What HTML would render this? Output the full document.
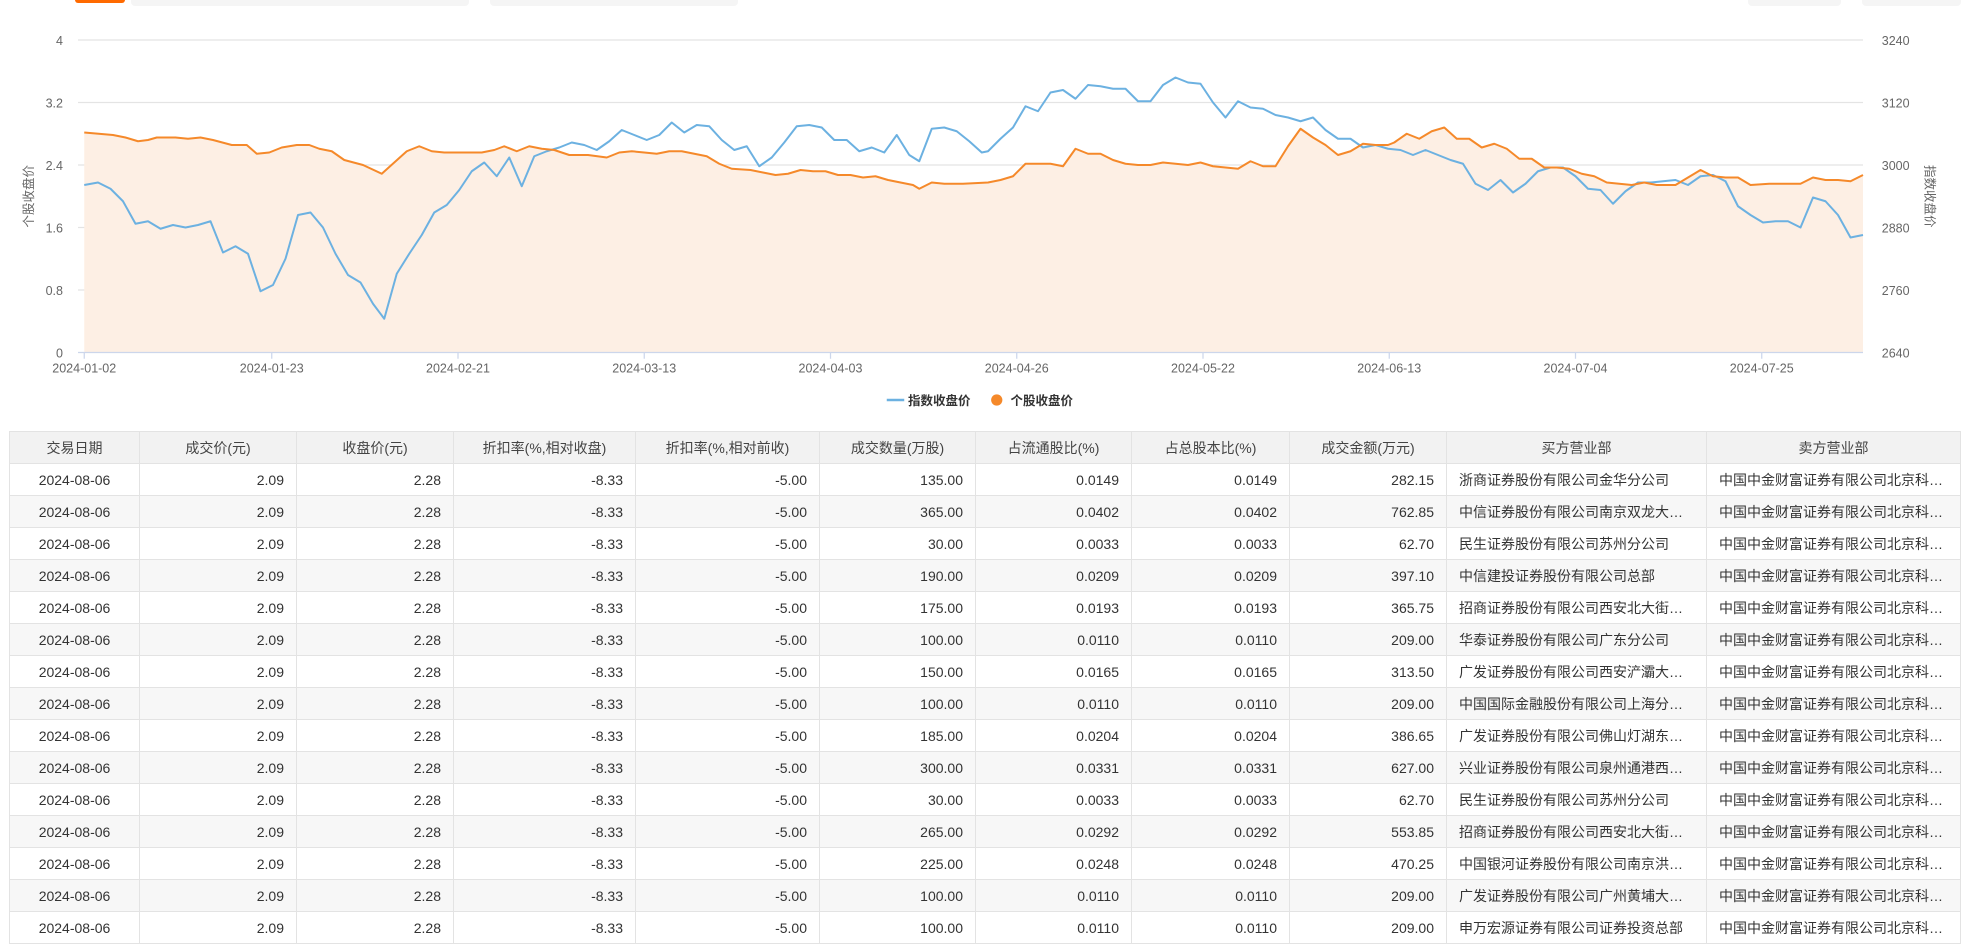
<!DOCTYPE html>
<html><head><meta charset="utf-8"><style>
body{margin:0;width:1961px;height:944px;overflow:hidden;background:#fff;font-family:"Liberation Sans","Noto Sans CJK SC",sans-serif;position:relative}
.tb{position:absolute;top:0;height:6px;background:#f5f5f5;border-radius:0 0 4px 4px}
svg{position:absolute;left:0;top:0}
table{position:absolute;top:431px;left:9px;border-collapse:collapse;table-layout:fixed;font-size:14px;color:#333}
td,th{height:31px;border:1px solid #e3e3e3;padding:0 12px;white-space:nowrap;overflow:hidden;font-weight:normal}
th{background:#f2f2f2;text-align:center;color:#444}
tbody tr:nth-child(even) td{background:#f7f7f7}
td.c{text-align:center}td.r{text-align:right}td.l{text-align:left}
</style></head><body>
<div class="tb" style="left:131px;width:338px"></div>
<div style="position:absolute;top:0;left:75px;width:50px;height:3px;background:#ff6a00;border-radius:0 0 3px 3px"></div>
<div class="tb" style="left:490px;width:248px"></div>
<div class="tb" style="left:1748px;width:93px"></div>
<div class="tb" style="left:1862px;width:99px"></div>
<svg width="1961" height="420" viewBox="0 0 1568 336" font-family="Liberation Sans,Noto Sans CJK SC,sans-serif">
<g stroke="#e4e4e4" stroke-width="1">
<line x1="62" y1="32" x2="1490" y2="32"/><line x1="62" y1="82" x2="1490" y2="82"/><line x1="62" y1="132" x2="1490" y2="132"/><line x1="62" y1="182" x2="1490" y2="182"/><line x1="62" y1="232" x2="1490" y2="232"/>
</g>
<polygon fill="#fdefe4" points="67,282 67,106 90,108 100,110 110,113 118,112 125,110 140,110 150,111 160,110 170,112 185,116 197,116 205,123 215,122 225,118 237,116 247,116 255,119 265,121 275,128 290,132 305,139 315,130 325,121 335,117 345,121 355,122 365,122 385,122 395,120 403,117 413,121 423,117 433,119 443,120 455,124 470,124 485,126 495,122 505,121 515,122 525,123 535,121 545,121 555,123 565,125 575,131 585,135 600,136 610,138 620,140 630,139 640,136 650,137 660,137 670,140 680,140 690,142 700,141 710,144 720,146 730,148 735,151 745,146 755,147 770,147 790,146 800,144 810,141 820,131 840,131 850,133 860,119 870,123 880,123 890,128 900,131 910,132 920,132 930,130 940,131 950,132 960,130 970,133 980,134 990,135 1000,129 1010,133 1020,133 1030,117 1040,103 1050,110 1060,116 1070,124 1080,121 1090,115 1100,116 1110,116 1115,114 1125,107 1135,111 1145,105 1155,102 1165,111 1175,111 1185,118 1195,115 1205,119 1215,127 1225,127 1235,134 1245,134 1255,135 1265,139 1275,141 1285,146 1295,147 1305,148 1315,146 1325,148 1340,148 1350,142 1360,136 1370,141 1380,142 1390,142 1400,148 1415,147 1425,147 1440,147 1450,142 1460,144 1470,144 1480,145 1490,140 1490,282"/>
<line x1="62" y1="282" x2="1490" y2="282" stroke="#ccd6eb"/>
<g stroke="#ccd6eb"><line x1="67" y1="282" x2="67" y2="287"/><line x1="217" y1="282" x2="217" y2="287"/><line x1="366" y1="282" x2="366" y2="287"/><line x1="515" y1="282" x2="515" y2="287"/><line x1="664" y1="282" x2="664" y2="287"/><line x1="813" y1="282" x2="813" y2="287"/><line x1="962" y1="282" x2="962" y2="287"/><line x1="1111" y1="282" x2="1111" y2="287"/><line x1="1260" y1="282" x2="1260" y2="287"/><line x1="1409" y1="282" x2="1409" y2="287"/></g>
<polyline fill="none" stroke="#6cb1e1" stroke-width="1.6" stroke-linejoin="round" points="67,148 78,146 88,151 98,161 108,179 118,177 128,183 138,180 148,182 158,180 168,177 178,202 188,197 198,203 208,233 218,228 228,207 238,172 248,170 258,182 268,203 278,220 288,226 298,243 307,255 317,219 327,203 337,188 347,170 357,164 367,152 377,137 387,130 397,141 407,126 417,149 427,125 437,121 447,118 457,114 467,116 477,120 487,113 497,104 507,108 517,112 527,108 537,98 547,106 557,100 567,101 577,112 587,120 597,117 607,133 617,126 627,114 637,101 647,100 657,102 667,112 677,112 687,121 697,118 707,122 717,108 727,124 735,129 745,103 755,102 765,105 775,113 785,122 790,121 800,111 810,102 820,85 830,89 840,74 850,72 860,79 870,68 880,69 890,71 900,71 910,81 920,81 930,68 940,62 950,66 960,67 970,82 980,94 990,81 1000,86 1010,87 1020,92 1030,94 1040,97 1050,94 1060,104 1070,111 1080,111 1090,118 1100,116 1110,119 1120,120 1130,124 1140,120 1150,124 1160,128 1170,131 1180,147 1190,152 1200,144 1210,154 1220,147 1230,137 1240,134 1250,134 1260,141 1270,151 1280,152 1290,163 1300,153 1310,146 1320,146 1330,145 1340,144 1350,148 1360,141 1370,140 1380,145 1390,165 1400,172 1410,178 1420,177 1430,177 1440,182 1450,158 1460,161 1470,172 1480,190 1490,188"/>
<polyline fill="none" stroke="#f5892a" stroke-width="1.6" stroke-linejoin="round" points="67,106 90,108 100,110 110,113 118,112 125,110 140,110 150,111 160,110 170,112 185,116 197,116 205,123 215,122 225,118 237,116 247,116 255,119 265,121 275,128 290,132 305,139 315,130 325,121 335,117 345,121 355,122 365,122 385,122 395,120 403,117 413,121 423,117 433,119 443,120 455,124 470,124 485,126 495,122 505,121 515,122 525,123 535,121 545,121 555,123 565,125 575,131 585,135 600,136 610,138 620,140 630,139 640,136 650,137 660,137 670,140 680,140 690,142 700,141 710,144 720,146 730,148 735,151 745,146 755,147 770,147 790,146 800,144 810,141 820,131 840,131 850,133 860,119 870,123 880,123 890,128 900,131 910,132 920,132 930,130 940,131 950,132 960,130 970,133 980,134 990,135 1000,129 1010,133 1020,133 1030,117 1040,103 1050,110 1060,116 1070,124 1080,121 1090,115 1100,116 1110,116 1115,114 1125,107 1135,111 1145,105 1155,102 1165,111 1175,111 1185,118 1195,115 1205,119 1215,127 1225,127 1235,134 1245,134 1255,135 1265,139 1275,141 1285,146 1295,147 1305,148 1315,146 1325,148 1340,148 1350,142 1360,136 1370,141 1380,142 1390,142 1400,148 1415,147 1425,147 1440,147 1450,142 1460,144 1470,144 1480,145 1490,140"/>
<g font-size="10" fill="#666" text-anchor="end">
<text x="50" y="36">4</text><text x="50" y="86">3.2</text><text x="50" y="136">2.4</text><text x="50" y="186">1.6</text><text x="50" y="236">0.8</text><text x="50" y="286">0</text>
</g>
<g font-size="10" fill="#666">
<text x="1505" y="36">3240</text><text x="1505" y="86">3120</text><text x="1505" y="136">3000</text><text x="1505" y="186">2880</text><text x="1505" y="236">2760</text><text x="1505" y="286">2640</text>
</g>
<g font-size="10" fill="#666" text-anchor="middle">
<text x="67" y="298">2024-01-02</text><text x="217" y="298">2024-01-23</text><text x="366" y="298">2024-02-21</text><text x="515" y="298">2024-03-13</text><text x="664" y="298">2024-04-03</text><text x="813" y="298">2024-04-26</text><text x="962" y="298">2024-05-22</text><text x="1111" y="298">2024-06-13</text><text x="1260" y="298">2024-07-04</text><text x="1409" y="298">2024-07-25</text>
</g>
<text font-size="10" fill="#666" text-anchor="middle" transform="translate(26,157) rotate(-90)">个股收盘价</text>
<text font-size="10" fill="#666" text-anchor="middle" transform="translate(1540,157) rotate(90)">指数收盘价</text>
<line x1="709" y1="320" x2="723" y2="320" stroke="#6cb1e1" stroke-width="2"/>
<text x="726" y="324" font-size="10" fill="#333" font-weight="bold">指数收盘价</text>
<circle cx="797" cy="320" r="4.5" fill="#f5892a"/>
<text x="808" y="324" font-size="10" fill="#333" font-weight="bold">个股收盘价</text>
</svg>
<table>
<colgroup><col style="width:130px"><col style="width:157px"><col style="width:157px"><col style="width:182px"><col style="width:184px"><col style="width:156px"><col style="width:156px"><col style="width:158px"><col style="width:157px"><col style="width:260px"><col style="width:254px"></colgroup>
<thead><tr><th>交易日期</th><th>成交价(元)</th><th>收盘价(元)</th><th>折扣率(%,相对收盘)</th><th>折扣率(%,相对前收)</th><th>成交数量(万股)</th><th>占流通股比(%)</th><th>占总股本比(%)</th><th>成交金额(万元)</th><th>买方营业部</th><th>卖方营业部</th></tr></thead>
<tbody>
<tr><td class="c">2024-08-06</td><td class="r">2.09</td><td class="r">2.28</td><td class="r">-8.33</td><td class="r">-5.00</td><td class="r">135.00</td><td class="r">0.0149</td><td class="r">0.0149</td><td class="r">282.15</td><td class="l">浙商证券股份有限公司金华分公司</td><td class="l">中国中金财富证券有限公司北京科…</td></tr>
<tr><td class="c">2024-08-06</td><td class="r">2.09</td><td class="r">2.28</td><td class="r">-8.33</td><td class="r">-5.00</td><td class="r">365.00</td><td class="r">0.0402</td><td class="r">0.0402</td><td class="r">762.85</td><td class="l">中信证券股份有限公司南京双龙大…</td><td class="l">中国中金财富证券有限公司北京科…</td></tr>
<tr><td class="c">2024-08-06</td><td class="r">2.09</td><td class="r">2.28</td><td class="r">-8.33</td><td class="r">-5.00</td><td class="r">30.00</td><td class="r">0.0033</td><td class="r">0.0033</td><td class="r">62.70</td><td class="l">民生证券股份有限公司苏州分公司</td><td class="l">中国中金财富证券有限公司北京科…</td></tr>
<tr><td class="c">2024-08-06</td><td class="r">2.09</td><td class="r">2.28</td><td class="r">-8.33</td><td class="r">-5.00</td><td class="r">190.00</td><td class="r">0.0209</td><td class="r">0.0209</td><td class="r">397.10</td><td class="l">中信建投证券股份有限公司总部</td><td class="l">中国中金财富证券有限公司北京科…</td></tr>
<tr><td class="c">2024-08-06</td><td class="r">2.09</td><td class="r">2.28</td><td class="r">-8.33</td><td class="r">-5.00</td><td class="r">175.00</td><td class="r">0.0193</td><td class="r">0.0193</td><td class="r">365.75</td><td class="l">招商证券股份有限公司西安北大街…</td><td class="l">中国中金财富证券有限公司北京科…</td></tr>
<tr><td class="c">2024-08-06</td><td class="r">2.09</td><td class="r">2.28</td><td class="r">-8.33</td><td class="r">-5.00</td><td class="r">100.00</td><td class="r">0.0110</td><td class="r">0.0110</td><td class="r">209.00</td><td class="l">华泰证券股份有限公司广东分公司</td><td class="l">中国中金财富证券有限公司北京科…</td></tr>
<tr><td class="c">2024-08-06</td><td class="r">2.09</td><td class="r">2.28</td><td class="r">-8.33</td><td class="r">-5.00</td><td class="r">150.00</td><td class="r">0.0165</td><td class="r">0.0165</td><td class="r">313.50</td><td class="l">广发证券股份有限公司西安浐灞大…</td><td class="l">中国中金财富证券有限公司北京科…</td></tr>
<tr><td class="c">2024-08-06</td><td class="r">2.09</td><td class="r">2.28</td><td class="r">-8.33</td><td class="r">-5.00</td><td class="r">100.00</td><td class="r">0.0110</td><td class="r">0.0110</td><td class="r">209.00</td><td class="l">中国国际金融股份有限公司上海分…</td><td class="l">中国中金财富证券有限公司北京科…</td></tr>
<tr><td class="c">2024-08-06</td><td class="r">2.09</td><td class="r">2.28</td><td class="r">-8.33</td><td class="r">-5.00</td><td class="r">185.00</td><td class="r">0.0204</td><td class="r">0.0204</td><td class="r">386.65</td><td class="l">广发证券股份有限公司佛山灯湖东…</td><td class="l">中国中金财富证券有限公司北京科…</td></tr>
<tr><td class="c">2024-08-06</td><td class="r">2.09</td><td class="r">2.28</td><td class="r">-8.33</td><td class="r">-5.00</td><td class="r">300.00</td><td class="r">0.0331</td><td class="r">0.0331</td><td class="r">627.00</td><td class="l">兴业证券股份有限公司泉州通港西…</td><td class="l">中国中金财富证券有限公司北京科…</td></tr>
<tr><td class="c">2024-08-06</td><td class="r">2.09</td><td class="r">2.28</td><td class="r">-8.33</td><td class="r">-5.00</td><td class="r">30.00</td><td class="r">0.0033</td><td class="r">0.0033</td><td class="r">62.70</td><td class="l">民生证券股份有限公司苏州分公司</td><td class="l">中国中金财富证券有限公司北京科…</td></tr>
<tr><td class="c">2024-08-06</td><td class="r">2.09</td><td class="r">2.28</td><td class="r">-8.33</td><td class="r">-5.00</td><td class="r">265.00</td><td class="r">0.0292</td><td class="r">0.0292</td><td class="r">553.85</td><td class="l">招商证券股份有限公司西安北大街…</td><td class="l">中国中金财富证券有限公司北京科…</td></tr>
<tr><td class="c">2024-08-06</td><td class="r">2.09</td><td class="r">2.28</td><td class="r">-8.33</td><td class="r">-5.00</td><td class="r">225.00</td><td class="r">0.0248</td><td class="r">0.0248</td><td class="r">470.25</td><td class="l">中国银河证券股份有限公司南京洪…</td><td class="l">中国中金财富证券有限公司北京科…</td></tr>
<tr><td class="c">2024-08-06</td><td class="r">2.09</td><td class="r">2.28</td><td class="r">-8.33</td><td class="r">-5.00</td><td class="r">100.00</td><td class="r">0.0110</td><td class="r">0.0110</td><td class="r">209.00</td><td class="l">广发证券股份有限公司广州黄埔大…</td><td class="l">中国中金财富证券有限公司北京科…</td></tr>
<tr><td class="c">2024-08-06</td><td class="r">2.09</td><td class="r">2.28</td><td class="r">-8.33</td><td class="r">-5.00</td><td class="r">100.00</td><td class="r">0.0110</td><td class="r">0.0110</td><td class="r">209.00</td><td class="l">申万宏源证券有限公司证券投资总部</td><td class="l">中国中金财富证券有限公司北京科…</td></tr>
</tbody></table>
</body></html>
